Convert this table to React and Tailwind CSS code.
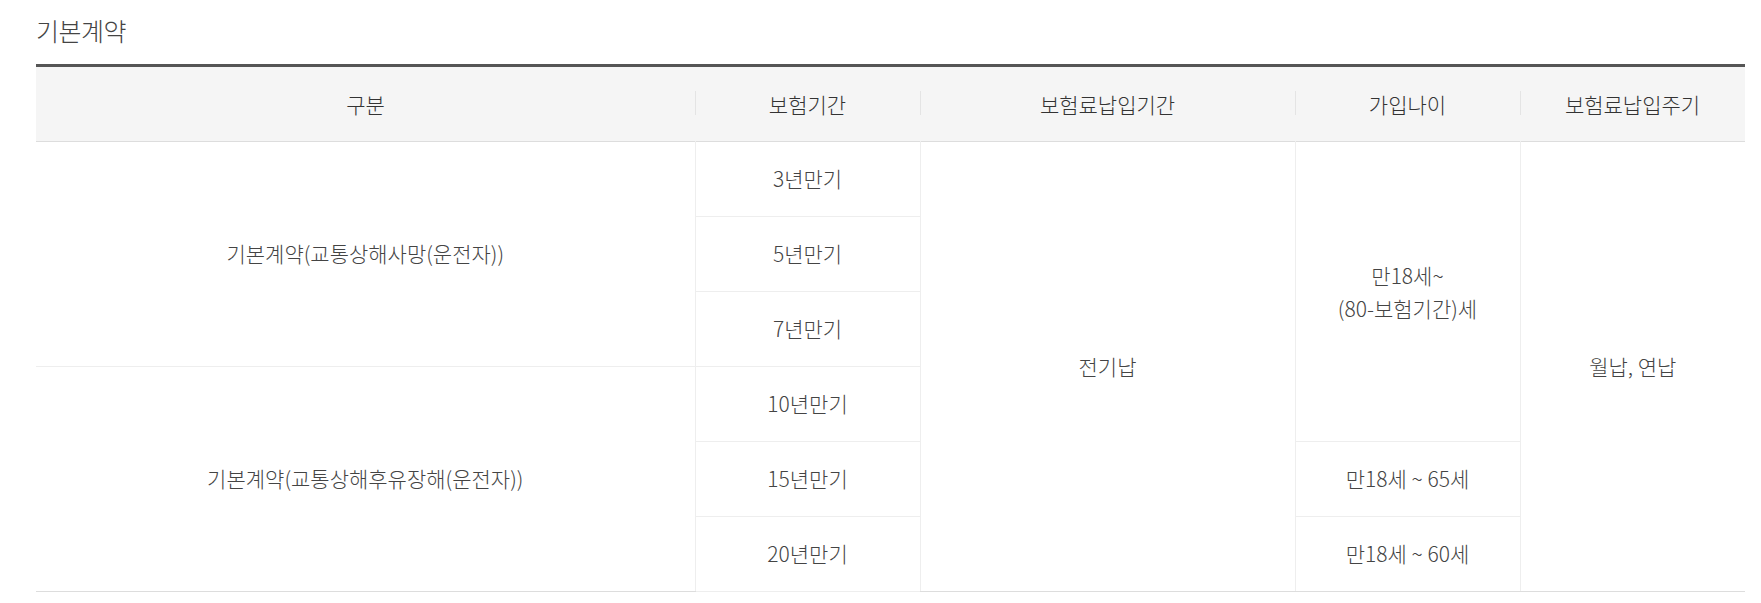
import React from 'react';

const headers = ['구분', '보험기간', '보험료납입기간', '가입나이', '보험료납입주기'];

const rows = [
    { period: '3년만기' },
    { period: '5년만기' },
    { period: '7년만기' },
    { period: '10년만기' },
    { period: '15년만기' },
    { period: '20년만기' },
];

const App = () => {
    const font = { fontFamily: '"Noto Sans CJK KR", "Noto Sans", sans-serif' };
    const line = 'border-[#eeeeee]';

    return (
        <div className="min-h-screen bg-white pl-[36px] pr-[16px] pt-[12px]" style={font}>
            <h3 className="text-[25px] leading-[36px] text-[#444] font-light tracking-[-0.5px]">기본계약</h3>

            <table className="mt-[16px] w-full table-fixed border-collapse border-t-[3px] border-[#555] text-center">
                <colgroup>
                    <col className="w-[659px]" />
                    <col className="w-[225px]" />
                    <col className="w-[375px]" />
                    <col className="w-[225px]" />
                    <col className="w-[225px]" />
                </colgroup>
                <thead>
                    <tr className="h-[76px] bg-[#f5f5f5] border-b border-[#dddddd]">
                        {headers.map((h, i) => (
                            <th
                                key={h}
                                className={`relative p-0 text-[21px] font-light text-[#333] ${
                                    i > 0
                                        ? "before:absolute before:left-0 before:top-[24px] before:h-[24px] before:w-px before:bg-[#e4e4e4] before:content-['']"
                                        : ''
                                }`}
                            >
                                <span className="relative top-[1px]">{h}</span>
                            </th>
                        ))}
                    </tr>
                </thead>
                <tbody className="text-[21px] font-light text-[#444]">
                    {rows.map((r, i) => {
                        const last = i === rows.length - 1;
                        const bottom = last ? 'border-b border-[#dddddd]' : `border-b ${line}`;
                        return (
                            <tr key={r.period} className="h-[75px]">
                                {i === 0 && (
                                    <td rowSpan={3} className={`p-0 ${bottom}`}>
                                        기본계약(교통상해사망(운전자))
                                    </td>
                                )}
                                {i === 3 && (
                                    <td rowSpan={3} className="p-0 border-b border-[#dddddd]">
                                        기본계약(교통상해후유장해(운전자))
                                    </td>
                                )}
                                <td className={`p-0 border-x ${line} ${bottom}`}>{r.period}</td>
                                {i === 0 && (
                                    <td rowSpan={6} className="p-0 border-b border-[#dddddd]">
                                        전기납
                                    </td>
                                )}
                                {i === 0 && (
                                    <td rowSpan={4} className={`p-0 border-x ${line} border-b leading-[33px]`}>
                                        만18세~
                                        <br />
                                        (80-보험기간)세
                                    </td>
                                )}
                                {i === 4 && (
                                    <td className={`p-0 border-x ${line} border-b`}>만18세 ~ 65세</td>
                                )}
                                {i === 5 && (
                                    <td className={`p-0 border-x ${line} border-b border-b-[#dddddd]`}>
                                        만18세 ~ 60세
                                    </td>
                                )}
                                {i === 0 && (
                                    <td rowSpan={6} className="p-0 border-b border-[#dddddd]">
                                        월납, 연납
                                    </td>
                                )}
                            </tr>
                        );
                    })}
                </tbody>
            </table>
        </div>
    );
};

export default App;
